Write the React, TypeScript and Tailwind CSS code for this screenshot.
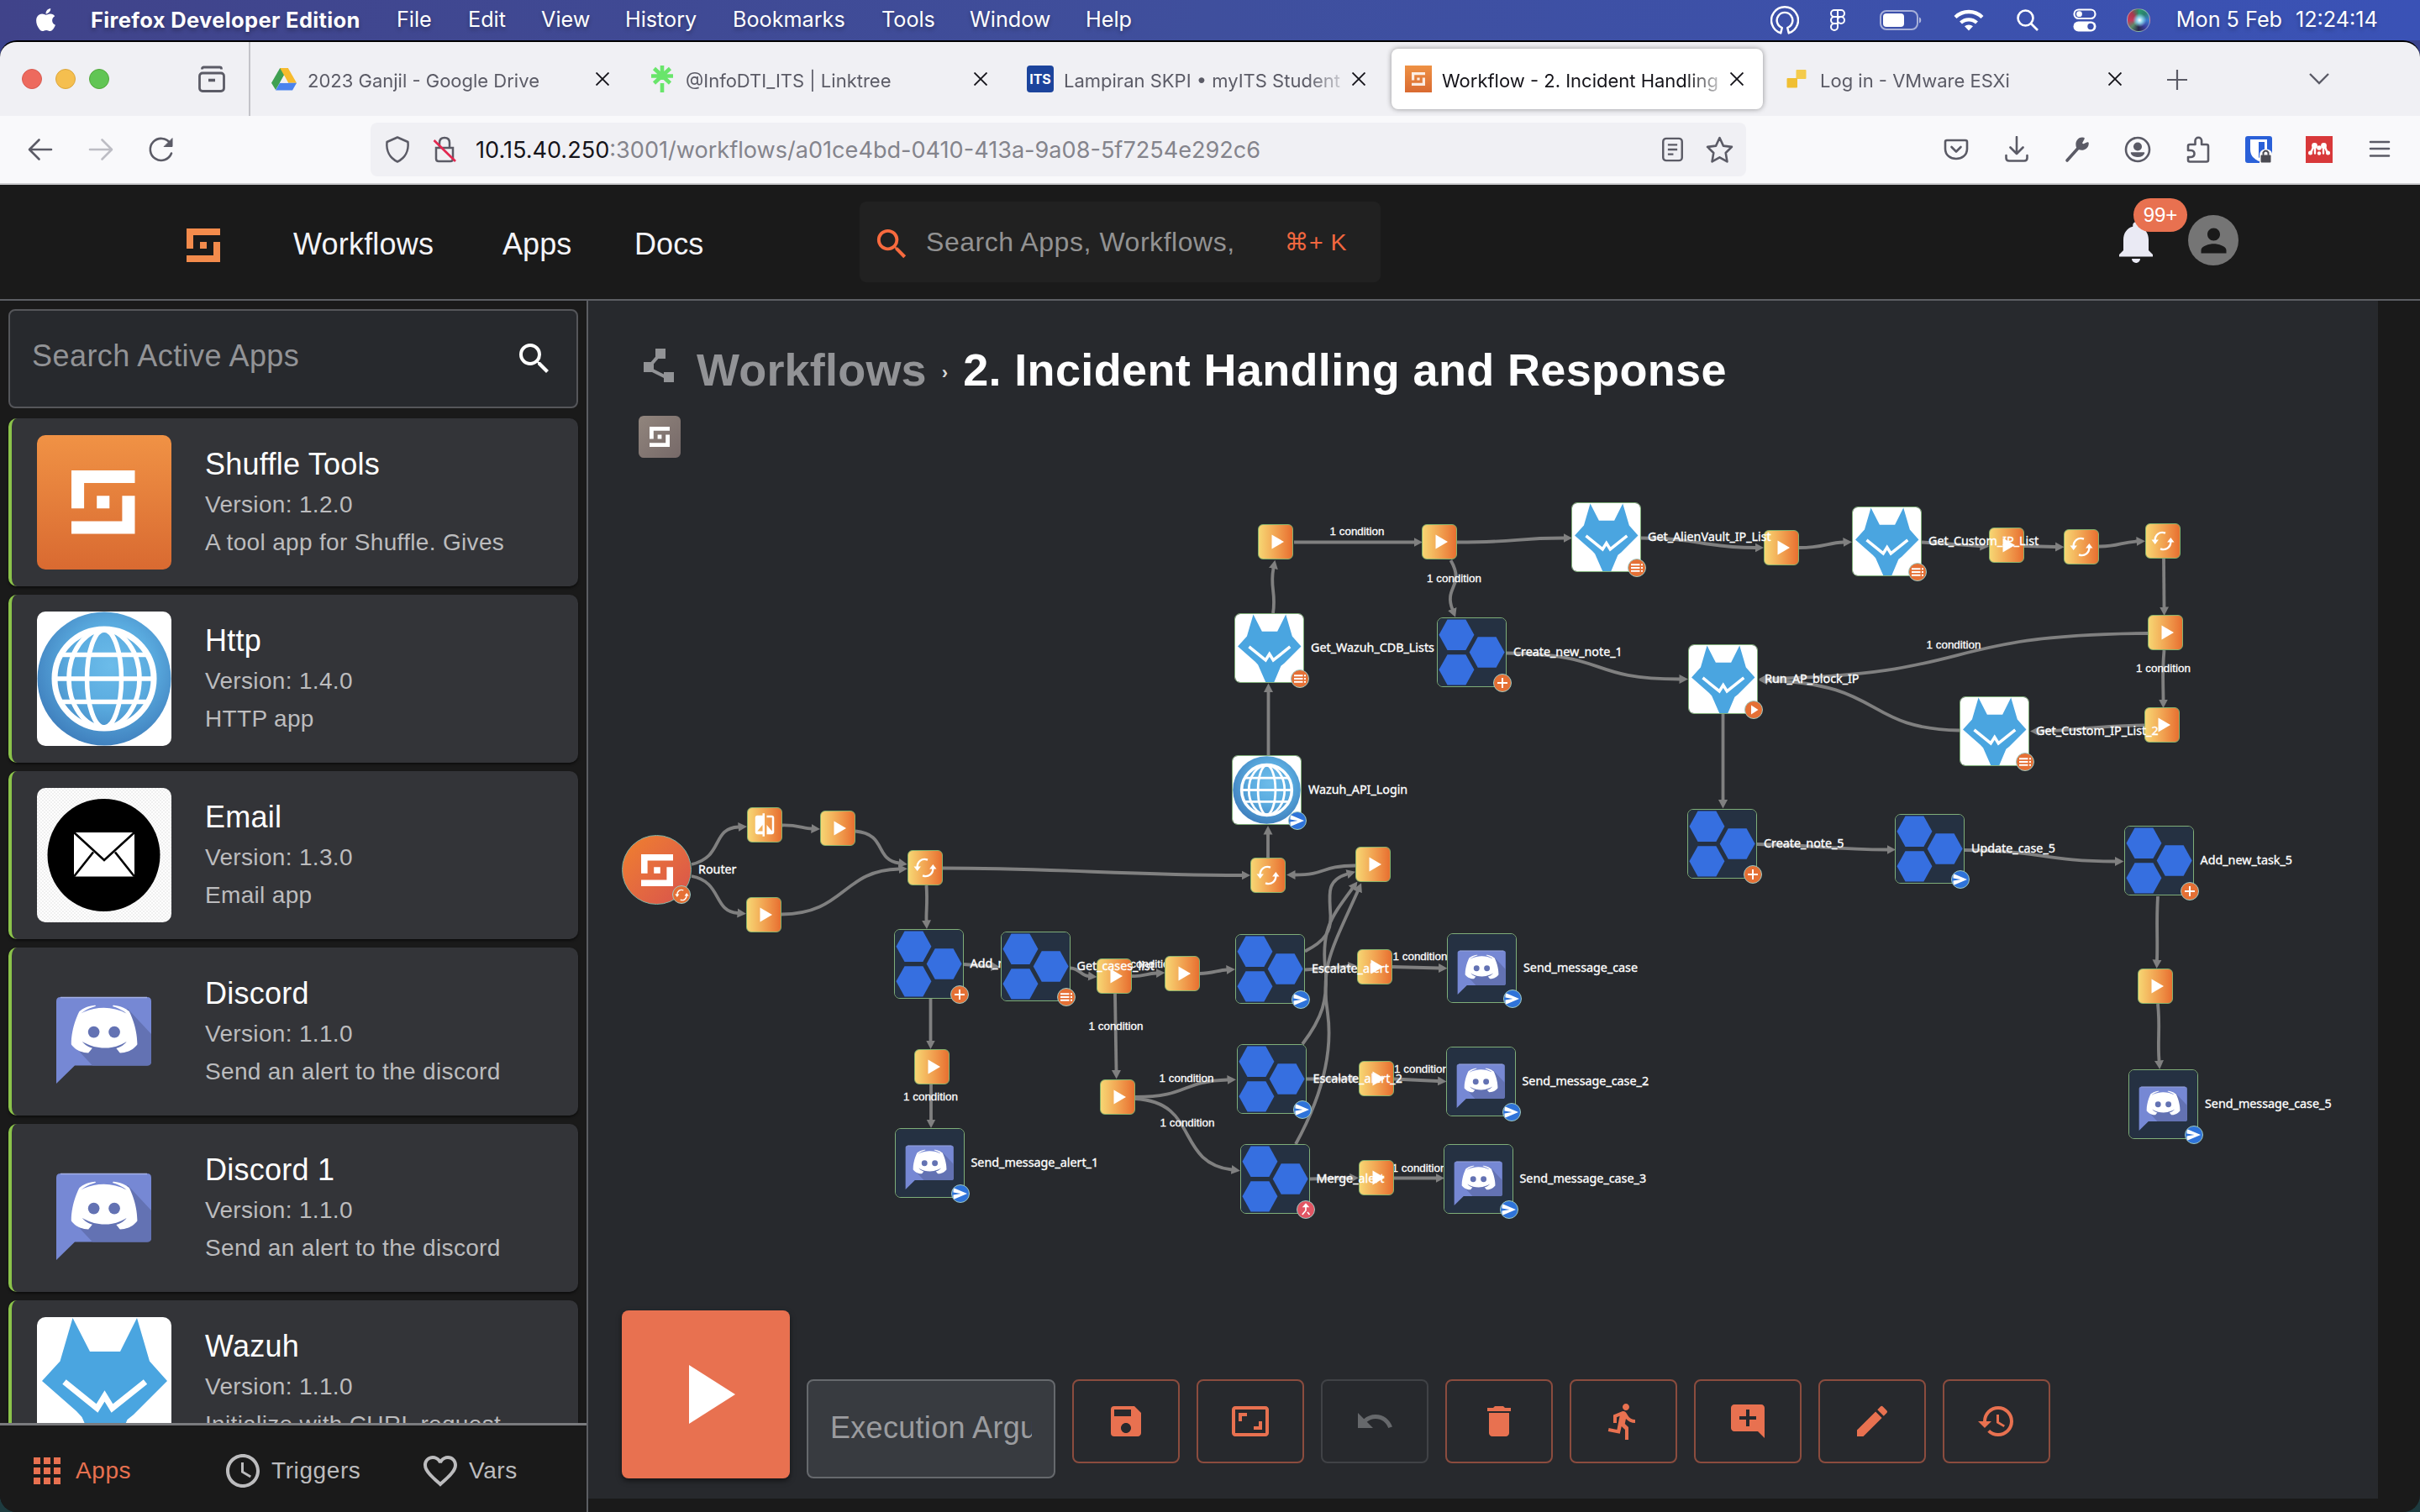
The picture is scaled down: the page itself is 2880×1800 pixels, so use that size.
import React from "react";
import {
  MdSave, MdAspectRatio, MdUndo, MdDelete, MdDirectionsRun, MdAddComment, MdEdit, MdRestore,
  MdSearch, MdApps, MdAccessTime, MdFavoriteBorder, MdNotifications, MdPolyline, MdPerson, MdCompare,
} from "react-icons/md";
import { FaApple } from "react-icons/fa";

/* ---------- artwork ---------- */

const S_PATH = "M0 0h5v1H1v2H0z M2 2h1v1H2z M4 2h1v3H0V4h4z";

const CLYDE =
  "M375.04 295.424c0-82.432-36.864-149.248-36.864-149.248-36.864-27.648-71.936-26.88-71.936-26.88l-3.584 4.096c43.52 13.312 63.744 32.512 63.744 32.512-60.811-33.329-132.244-33.335-191.232-7.424-9.472 4.352-15.104 7.424-15.104 7.424s21.248-20.224 67.328-33.536l-2.56-3.072s-35.072-.768-71.936 26.88c0 0-36.864 66.816-36.864 149.248 0 0 21.504 37.12 78.08 38.912 0 0 9.472-11.52 17.152-21.248-32.512-9.728-44.8-30.208-44.8-30.208 3.766 2.636 9.976 6.053 10.496 6.4 43.21 24.198 104.588 32.126 159.744 8.96 8.96-3.328 18.944-8.192 29.44-15.104 0 0-12.8 20.992-46.336 30.464 7.68 9.728 16.896 20.736 16.896 20.736 56.576-1.792 78.336-38.912 78.336-38.912z";

function ShuffleArt() {
  return (
    <svg viewBox="0 0 160 160" className="block size-full">
      <defs>
        <linearGradient id="shuffleBg" x1="0" y1="0" x2="0" y2="1">
          <stop offset="0" stopColor="#f09245" />
          <stop offset="1" stopColor="#d96a31" />
        </linearGradient>
      </defs>
      <rect width="160" height="160" fill="url(#shuffleBg)" />
      <path d={S_PATH} fill="#fff" transform="translate(41 42) scale(15.1)" />
    </svg>
  );
}

function HttpArt() {
  return (
    <svg viewBox="0 0 160 160" className="block size-full">
      <defs>
        <radialGradient id="globeBg" cx="0.55" cy="0.4" r="0.62">
          <stop offset="0" stopColor="#6cbcea" />
          <stop offset="0.5" stopColor="#5aabdf" />
          <stop offset="1" stopColor="#3f7fbd" />
        </radialGradient>
      </defs>
      <rect width="160" height="160" fill="#fff" />
      <circle cx="80" cy="80" r="79.5" fill="url(#globeBg)" />
      <g fill="none" stroke="#fff" strokeWidth="5.5">
        <circle cx="80" cy="80" r="59" strokeWidth="7" />
        <ellipse cx="80" cy="80" rx="42" ry="58" />
        <ellipse cx="80" cy="80" rx="20.500" ry="58" />
        <path d="M21 80h118M29 51.500h102M29 107.500h102" />
      </g>
    </svg>
  );
}

function EmailArt() {
  return (
    <svg viewBox="0 0 160 160" className="block size-full">
      <defs>
        <pattern id="checks" width="4" height="4" patternUnits="userSpaceOnUse">
          <rect width="4" height="4" fill="#ffffff" />
          <path d="M0 0h2v2H0zM2 2h2v2H2z" fill="#f0f0f0" />
        </pattern>
      </defs>
      <rect width="160" height="160" fill="url(#checks)" />
      <circle cx="79.500" cy="80" r="67" fill="#000" />
      <rect x="44" y="53" width="72" height="52.500" fill="#fff" />
      <path d="M44 53l36 33 36-33M44 105.500l23-29M116 105.500L93 76.500" fill="none" stroke="#000" strokeWidth="2.600" />
    </svg>
  );
}

function DiscordArt({ dark }: { dark?: boolean }) {
  return (
    <svg viewBox="0 0 160 160" className="block size-full">
      {dark && <rect width="160" height="160" fill="#253142" />}
      <path d="M28 39h103q5 0 5 5v71.500q0 5-5 5H45L23 142V44q0-5 5-5z" fill="#7688d4" />
      <path d="M108 53l28 30v32.500q0 5-5 5H66L45 98z" fill="#6372b3" />
      <path d="M28 39.500h103" stroke="#a3afe6" strokeWidth="1.500" />
      <g transform="translate(20.800 17.500) scale(0.263)">
        <path d={CLYDE} fill="#fff" />
        <circle cx="271" cy="240" r="26" fill="#6372b3" />
        <circle cx="178" cy="240" r="26" fill="#6372b3" />
      </g>
    </svg>
  );
}

function WazuhArt() {
  return (
    <svg viewBox="0 0 160 160" className="block size-full">
      <rect width="160" height="160" fill="#fff" />
      <path
        d="M42.500 1L63 41h36L119 1l15 51.500L155 76l-40 40-7.500 6L91.500 160h-20L53.500 119 47 112 6 76l21.500-23.500z"
        fill="#4aa5e0"
      />
      <path d="M32.500 77L71.500 108.500 80.500 94 89.500 108.500 129 77" fill="none" stroke="#fff" strokeWidth="7" />
    </svg>
  );
}

function HiveArt() {
  return (
    <svg viewBox="0 0 83 83" className="block size-full">
      <rect width="83" height="83" fill="#253142" />
      <g fill="#366fe0">
        <path d="M1.500 20.200L11.800 1.600h22.400L44.500 20.200 34.200 39H11.800z" />
        <path d="M38.600 41.500L48.900 22.900h22.400L81.600 41.500 71.300 60.200H48.900z" />
        <path d="M1.500 62.800L11.800 44.200h22.400L44.500 62.800 34.200 81.500H11.800z" />
      </g>
    </svg>
  );
}

/* ---------- workflow graph ---------- */

type Kind = "play" | "loop" | "compare" | "hive" | "wazuh" | "http" | "discord" | "router";
type Badge = "plus" | "list" | "send" | "run" | "merge" | "loop";
type GraphNode = { k: Kind; x: number; y: number; label?: string; badge?: Badge };

const nodes: GraphNode[] = [
  { k: "router", x: 782, y: 1036, label: "Router", badge: "loop" },
  { k: "compare", x: 910, y: 982.5 },
  { k: "play", x: 997.5, y: 986.5 },
  { k: "play", x: 909, y: 1089.5 },
  { k: "loop", x: 1101.5, y: 1033.5 },
  { k: "hive", x: 1105.5, y: 1147.5, label: "Add_new_case", badge: "plus" },
  { k: "play", x: 1326, y: 1162.5 },
  { k: "hive", x: 1232.5, y: 1151, label: "Get_cases_list", badge: "list" },
  { k: "play", x: 1407.5, y: 1159 },
  { k: "play", x: 1109, y: 1270.5 },
  { k: "play", x: 1330, y: 1306 },
  { k: "discord", x: 1106.5, y: 1385, label: "Send_message_alert_1", badge: "send" },
  { k: "loop", x: 1509.5, y: 1042 },
  { k: "play", x: 1634, y: 1029.5 },
  { k: "play", x: 1636, y: 1151 },
  { k: "hive", x: 1512, y: 1154, label: "Escalate_alert", badge: "send" },
  { k: "discord", x: 1764, y: 1153, label: "Send_message_case", badge: "send" },
  { k: "play", x: 1638, y: 1284.5 },
  { k: "hive", x: 1513.5, y: 1284.5, label: "Escalate_alert_2", badge: "send" },
  { k: "discord", x: 1762.5, y: 1288, label: "Send_message_case_2", badge: "send" },
  { k: "play", x: 1638, y: 1402.5 },
  { k: "hive", x: 1517.5, y: 1403.5, label: "Merge_alert", badge: "merge" },
  { k: "discord", x: 1759.5, y: 1403.5, label: "Send_message_case_3", badge: "send" },
  { k: "play", x: 1518.5, y: 645.5 },
  { k: "play", x: 1713.5, y: 645.5 },
  { k: "play", x: 2120, y: 652 },
  { k: "wazuh", x: 1912, y: 639.5, label: "Get_AlienVault_IP_List", badge: "list" },
  { k: "play", x: 2388.5, y: 649.5 },
  { k: "wazuh", x: 2246, y: 644.5, label: "Get_Custom_IP_List", badge: "list" },
  { k: "loop", x: 2477, y: 651 },
  { k: "loop", x: 2574.5, y: 644 },
  { k: "play", x: 2577, y: 753.5 },
  { k: "play", x: 2573, y: 863.5 },
  { k: "wazuh", x: 2374, y: 871, label: "Get_Custom_IP_List_2", badge: "list" },
  { k: "wazuh", x: 1511, y: 772, label: "Get_Wazuh_CDB_Lists", badge: "list" },
  { k: "hive", x: 1752, y: 777, label: "Create_new_note_1", badge: "plus" },
  { k: "wazuh", x: 2051, y: 809, label: "Run_AP_block_IP", badge: "run" },
  { k: "http", x: 1508, y: 941, label: "Wazuh_API_Login", badge: "send" },
  { k: "hive", x: 2050, y: 1005, label: "Create_note_5", badge: "plus" },
  { k: "hive", x: 2297, y: 1011, label: "Update_case_5", badge: "send" },
  { k: "hive", x: 2569.5, y: 1025, label: "Add_new_task_5", badge: "plus" },
  { k: "play", x: 2565, y: 1174 },
  { k: "discord", x: 2575, y: 1315, label: "Send_message_case_5", badge: "send" },
];

const edges = [
  "M823 1029C862 1020 846 986 879 984.5",
  "M931 982.500C948 982 956 986 966 986.500",
  "M1018 989.500C1056 993 1040 1023 1070 1027.500",
  "M823 1043C860 1050 848 1085 878 1087",
  "M930 1088.500C1006 1088 1002 1036 1070 1034.500",
  "M1102.500 1054C1104 1075 1102 1085 1102.500 1096",
  "M1107.500 1188V1239",
  "M1108 1291V1333",
  "M1122 1033.500C1260 1033.500 1340 1042 1478 1042",
  "M1147 1148L1180 1150.500",
  "M1274 1152.500C1285 1153 1286 1161 1295.500 1162",
  "M1347 1162C1360 1163 1364 1159 1376.500 1158.500",
  "M1428 1159C1442 1159 1450 1155 1460 1154.500",
  "M1327 1183L1328.500 1274.500",
  "M1351 1306C1415 1306 1405 1287 1461 1285.500",
  "M1351 1308C1428 1312 1398 1384 1466 1392.500",
  "M1509 1021V993",
  "M1613 1030.500C1570 1031 1580 1041.500 1541 1041.500",
  "M1553 1132.500C1578 1120 1584 1108 1583.500 1090C1582 1064 1578 1048 1603.500 1040.500",
  "M1550 1243C1575 1210 1579 1190 1578 1160C1571 1108 1584 1092 1609.500 1057.500",
  "M1542 1362C1576 1300 1586 1250 1580 1206C1571 1150 1585 1130 1616 1060.500",
  "M1553 1154.500L1605 1150.500",
  "M1657 1151L1712.500 1152.500",
  "M1555 1284.500H1607",
  "M1659 1284.500L1711.500 1287",
  "M1559 1403.500L1607 1402.500",
  "M1659 1402.500H1709",
  "M1509.500 900V823.500",
  "M1515 730C1519 705 1511 700 1515.500 676.500",
  "M1540 645.500H1683",
  "M1734 645.500C1810 645.500 1800 640.500 1861 640.500",
  "M1726.500 667C1744 698 1718 698 1728.500 725.500",
  "M1953 640.500C2020 640.500 2030 652 2089 652",
  "M2141 652C2170 652 2175 646 2194 645.500",
  "M2287 645.500L2357 650",
  "M2409 650L2446.500 651",
  "M2498 650.500C2520 651 2525 645 2543 644.500",
  "M2575 665L2575.500 723",
  "M2575.500 774C2573 800 2574.500 815 2574.500 833",
  "M2556 754C2300 756 2360 803 2103 808",
  "M2332 869.500C2215 867 2245 814 2103 810",
  "M2552 863.500C2490 864 2470 870 2426 870.500",
  "M1793 777.500C1920 779 1885 808 1999 808.500",
  "M2050.500 850V952.500",
  "M2091 1005C2160 1006 2180 1011.500 2246 1011.500",
  "M2338 1012C2430 1012.500 2430 1025 2517.500 1025.500",
  "M2568 1067C2566 1100 2568 1115 2567 1143",
  "M2568 1195C2571 1225 2567.500 1235 2569.500 1263",
];

const edgeLabels: [number, number][] = [
  [1615, 632.5], [1730.5, 688.5], [2325, 768], [2574.5, 796], [1107.5, 1305.5], [1328, 1221.5],
  [1366.5, 1147.5], [1412, 1283.5], [1413, 1336.5], [1690, 1138.5], [1691.5, 1273], [1689, 1390.5],
];

function LoopGlyph({ className }: { className?: string }) {
  return (
    <svg viewBox="0 0 28 28" className={className} fill="none" stroke="#fff" strokeWidth="2.400">
      <path d="M17 4.700C10 2 4.600 7 4.600 13.500M11 23.300c7 2.700 12.400-2.300 12.400-8.800" />
      <path d="M0.500 12.500h8.400L4.700 18zM27.500 15.500h-8.400L23.300 10z" fill="#fff" stroke="none" />
    </svg>
  );
}

function BadgeGlyph({ badge }: { badge: Badge }) {
  if (badge === "loop") return <LoopGlyph className="size-[17px]" />;
  return (
    <svg viewBox="0 0 20 20" className="size-[20px]">
      {badge === "plus" && <path d="M10 4v12M4 10h12" stroke="#fff" strokeWidth="2" />}
      {badge === "list" && <path d="M3 6.300h10.500M15 6.300h2M3 10h10.500M15 10h2M3 13.700h10.500M15 13.700h2" stroke="#fff" strokeWidth="1.900" />}
      {badge === "send" && <path d="M1.500 3L18 10 1.500 17V11.500L10.500 10 1.500 8.500z" fill="#fff" />}
      {badge === "run" && <path d="M7 4.500l8.500 5.500L7 15.500z" fill="#fff" />}
      {badge === "merge" && (
        <path d="M10 5v6L5.800 16M12 13l2.500 3M7.500 6.500L10 3.500l2.500 3z" fill="none" stroke="#fff" strokeWidth="1.700" />
      )}
    </svg>
  );
}

const badgeColor: Record<Badge, string> = {
  plus: "bg-[#e57035]", list: "bg-[#e57035]", run: "bg-[#e57035]", loop: "bg-[#e57035]",
  send: "bg-[#2f73d9]", merge: "bg-[#e25563]",
};

function NodeView({ n }: { n: GraphNode }) {
  const small = n.k === "play" || n.k === "loop" || n.k === "compare";
  const half = small ? 21.5 : 42;
  const pos = { left: n.x - 700 - half, top: n.y - 358 - half };
  if (small) {
    return (
      <div
        style={pos}
        className="absolute flex size-[42px] items-center justify-center rounded-[6px] border border-[#86b26c] bg-linear-to-r from-[#f6d673] to-[#e76f30]"
      >
        {n.k === "play" && (
          <svg viewBox="0 0 42 42" className="size-[42px] shrink-0"><path d="M16.500 12.500L31 21 16.500 29.500z" fill="#fff" /></svg>
        )}
        {n.k === "loop" && <LoopGlyph className="size-[28px]" />}
        {n.k === "compare" && <MdCompare className="size-[30px] text-white" />}
      </div>
    );
  }
  return (
    <div style={pos} className="absolute size-[83px]">
      <div
        className={
          n.k === "router"
            ? "flex size-full items-center justify-center rounded-full border border-[#7fb5a5] bg-linear-to-br from-[#f0802b] to-[#d8524b]"
            : "size-full overflow-hidden rounded-[7px] border border-[#7fae79]"
        }
      >
        {n.k === "router" && <svg viewBox="0 0 5 5" className="size-[38px]"><path d={S_PATH} fill="#fff" /></svg>}
        {n.k === "hive" && <HiveArt />}
        {n.k === "wazuh" && <WazuhArt />}
        {n.k === "http" && <HttpArt />}
        {n.k === "discord" && <DiscordArt dark />}
      </div>
      {n.badge && (
        <div
          className={`absolute flex size-[22px] items-center justify-center overflow-hidden rounded-full border border-[#9cc7c0] ${badgeColor[n.badge]} ${n.badge === "loop" ? "left-[60px] top-[60px]" : "left-[67px] top-[67px]"}`}
        >
          <BadgeGlyph badge={n.badge} />
        </div>
      )}
      <span className="absolute left-[91px] top-[31px] whitespace-nowrap font-['Noto_Sans',sans-serif] text-[14.3px] leading-[20px] text-white [-webkit-text-stroke:0.35px_#fff]">
        {n.label}
      </span>
    </div>
  );
}

function Graph() {
  return (
    <>
      <svg viewBox="700 358 2130 1426" className="absolute left-0 top-0 h-[1426px] w-[2130px]">
        <defs>
          <marker id="tip" markerWidth="12" markerHeight="12" refX="0.500" refY="6" orient="auto" markerUnits="userSpaceOnUse">
            <path d="M0 0.500L10.500 6 0 11.500z" fill="#808080" />
          </marker>
        </defs>
        {edges.map((d) => (
          <path key={d} d={d} fill="none" stroke="#808080" strokeWidth="3.800" markerEnd="url(#tip)" />
        ))}
      </svg>
      {edgeLabels.map(([x, y]) => (
        <span
          key={`${x}-${y}`}
          style={{ left: x - 700, top: y - 358 }}
          className="absolute -translate-x-1/2 -translate-y-1/2 whitespace-nowrap text-[13.4px] leading-[16px] text-white [-webkit-text-stroke:0.3px_#fff]"
        >
          1 condition
        </span>
      ))}
      {nodes.map((n) => <NodeView key={`${n.x}-${n.y}`} n={n} />)}
    </>
  );
}

/* ---------- menu bar ---------- */

function MenuBar() {
  return (
    <div className="flex h-[48px] shrink-0 items-center bg-linear-to-r from-[#40438a] via-[#3f4f9d] to-[#3a52b6] font-['Inter',sans-serif] text-[25.2px] text-white [text-shadow:0_3px_5px_rgba(0,0,0,0.3)]">
      <FaApple className="ml-[39px] mt-[-2px] size-[31px]" />
      <span className="ml-[38px] w-[364px] whitespace-nowrap text-[25.500px] font-bold tracking-[0.350px]">Firefox Developer Edition</span>
      <span className="w-[85px]">File</span>
      <span className="w-[87px]">Edit</span>
      <span className="w-[100px]">View</span>
      <span className="w-[128px]">History</span>
      <span className="w-[177px]">Bookmarks</span>
      <span className="w-[105px]">Tools</span>
      <span className="w-[138px]">Window</span>
      <span>Help</span>
      <div className="ml-auto flex h-full items-center">
        <svg viewBox="0 0 32 32" className="size-[34px]" fill="none" stroke="#fff" strokeWidth="2.300" strokeLinejoin="round">
          <path d="M11.500 30.500A15 15 0 1 1 20.500 30.500L19 24.500A8.800 8.800 0 1 0 13 24.500z" />
        </svg>
        <svg viewBox="0 0 20 28" className="ml-[36px] h-[28px] w-[20px]" fill="none" stroke="#fff" strokeWidth="2">
          <path d="M10 2H6a4 4 0 0 0 0 8h4zM10 2h4a4 4 0 0 1 0 8h-4zM10 10H6a4 4 0 0 0 0 8h4zM14 10a4 4 0 1 1 0 8 4 4 0 0 1 0-8zM10 18H6a4 4 0 1 0 4 4z" />
        </svg>
        <svg viewBox="0 0 50 24" className="ml-[40px] h-[24px] w-[50px]">
          <rect x="1" y="1" width="44" height="22" rx="7" fill="none" stroke="#fff" strokeOpacity="0.55" strokeWidth="2" />
          <rect x="4" y="4" width="25" height="16" rx="4" fill="#fff" />
          <path d="M47 8.500c3 .8 3 6.200 0 7z" fill="#fff" fillOpacity="0.600" />
        </svg>
        <svg viewBox="0 0 36 26" className="ml-[38px] h-[26px] w-[36px]" fill="none" stroke="#fff" strokeWidth="4.300">
          <path d="M2 9.500a23 23 0 0 1 32 0M8.500 16a14 14 0 0 1 19 0" />
          <path d="M18 25.500l5-5.200a7.500 7.500 0 0 0-10 0z" fill="#fff" stroke="none" />
        </svg>
        <svg viewBox="0 0 28 28" className="ml-[38px] size-[28px]" fill="none" stroke="#fff" strokeWidth="2.600">
          <circle cx="11.500" cy="11.500" r="9" /><path d="M18 18l8 8" />
        </svg>
        <svg viewBox="0 0 28 28" className="ml-[40px] size-[28px]">
          <rect x="1.500" y="1.500" width="25" height="10.500" rx="5.200" fill="none" stroke="#fff" strokeWidth="2.200" />
          <circle cx="7.500" cy="6.700" r="3.400" fill="#fff" />
          <rect x="0.500" y="15.500" width="27" height="12" rx="6" fill="#fff" />
          <circle cx="21" cy="21.500" r="3.700" fill="#3c51ad" />
        </svg>
        <div className="ml-[36px] size-[28px] rounded-full border border-white/40 bg-[radial-gradient(circle_at_55%_50%,#ffffff_0%,#8ad0e8_18%,transparent_42%),conic-gradient(#2a9a6f,#2a7f6f,#3a7bd0,#3b3fa0,#28284a,#5a8a6a,#c8385a,#a8384e,#2d8a5f)]" />
        <span className="ml-[31px] whitespace-pre">Mon 5 Feb</span>
        <span className="ml-[16px] mr-[37px] w-[111px] whitespace-nowrap">12:24:14</span>
      </div>
    </div>
  );
}

/* ---------- browser chrome ---------- */

function DriveIcon() {
  return (
    <svg viewBox="0 0 30 27" className="h-[27px] w-[30px]">
      <path d="M10.200 0h9.600L10 17.500 5 26 0 17.800z" fill="#3fa052" />
      <path d="M10.200 0h9.600L30 17.800H20.200z" fill="#f7bb2d" />
      <path d="M10 17.800h20L25 26.500H5z" fill="#4a83ee" />
      <path d="M15 8.700l-5 9.100h10z" fill="#f0f0f4" />
    </svg>
  );
}
function LinktreeIcon() {
  return (
    <svg viewBox="0 0 28 32" className="h-[32px] w-[28px]" stroke="#69e56b" strokeWidth="4.600" fill="none">
      <path d="M14 0v17M14 21v11M1 12.500h26M4.500 3.500L23.500 21M23.500 3.500L4.500 21" />
    </svg>
  );
}
function ItsIcon() {
  return (
    <span className="flex size-[32px] items-center justify-center rounded-[4px] bg-[#1c449c] text-[16px] font-bold leading-none text-white">ITS</span>
  );
}
function ShuffleTabIcon() {
  return (
    <span className="flex size-[32px] items-center justify-center bg-linear-to-b from-[#ee9144] to-[#d96a31]">
      <svg viewBox="0 0 5 5" className="size-[16px]"><path d={S_PATH} fill="#fff" fillOpacity="0.850" /></svg>
    </span>
  );
}
function VmIcon() {
  return (
    <svg viewBox="0 0 24 22" className="h-[22px] w-[24px]">
      <rect x="11.500" y="0" width="12" height="11" rx="1" fill="#f4cb4c" />
      <rect x="0.500" y="10" width="12.500" height="11.500" rx="1" fill="#f0bf33" />
    </svg>
  );
}

const tabs = [
  { t: "2023 Ganjil - Google Drive", I: DriveIcon },
  { t: "@InfoDTI_ITS | Linktree", I: LinktreeIcon },
  { t: "Lampiran SKPI • myITS Student", I: ItsIcon },
  { t: "Workflow - 2. Incident Handling", I: ShuffleTabIcon, active: true },
  { t: "Log in - VMware ESXi", I: VmIcon },
];

function TabStrip() {
  return (
    <div className="flex h-[88px] items-center bg-[#f0f0f4] font-['Inter',sans-serif]">
      <div className="ml-[26px] flex gap-[16px]">
        <i className="size-[24px] rounded-full border border-[#d85a50] bg-[#ed6a5e]" />
        <i className="size-[24px] rounded-full border border-[#dba63c] bg-[#f5bf4f]" />
        <i className="size-[24px] rounded-full border border-[#52a83c] bg-[#61c554]" />
      </div>
      <svg viewBox="0 0 32 32" className="ml-[106px] size-[32px]" fill="none" stroke="#5b5b66" strokeWidth="2.800">
        <rect x="1.500" y="9" width="29" height="21.500" rx="3.500" />
        <path d="M4.500 4.500V4Q4.500 2 6.500 2h19q2 0 2 2v.5" />
        <path d="M12 17.500h8" strokeWidth="3.500" />
      </svg>
      <div className="ml-[28px] h-full w-[2px] bg-[#c3c3c9]" />
      <div className="ml-[4px] flex">
        {tabs.map(({ t, I, active }) => (
          <div key={t} className="w-[450px] px-[4px]">
            <div className={`flex h-[72px] items-center rounded-[8px] pl-[16px] ${active ? "bg-white shadow-[0_0_6px_rgba(0,0,0,0.4)]" : ""}`}>
              <span className="flex w-[32px] justify-center"><I /></span>
              <span
                className={`ml-[12px] mt-[4px] w-[332px] overflow-hidden whitespace-nowrap text-[22px] ${active ? "text-[#15141a]" : "text-[#5b5b66]"} [mask-image:linear-gradient(90deg,#000_290px,rgba(0,0,0,0.2)_332px)]`}
              >
                {t}
              </span>
              <svg viewBox="0 0 16 16" className="ml-[11px] size-[16px]" stroke="#15141a" strokeWidth="1.900"><path d="M0.500 0.500l15 15M15.500 0.500l-15 15" /></svg>
            </div>
          </div>
        ))}
      </div>
      <svg viewBox="0 0 24 24" className="ml-[27px] mt-[2px] size-[24px]" stroke="#5b5b66" strokeWidth="2.200"><path d="M12 0v24M0 12h24" /></svg>
      <svg viewBox="0 0 24 14" className="ml-[145px] h-[14px] w-[24px]" fill="none" stroke="#5b5b66" strokeWidth="2.400"><path d="M1 1l11 11L23 1" /></svg>
    </div>
  );
}

function Cell({ children }: { children: React.ReactNode }) {
  return (
    <span className="flex w-[72px] justify-center">
      <svg viewBox="0 0 32 32" className="size-[32px]" fill="none" stroke="#5b5b66" strokeWidth="2.600" strokeLinecap="round" strokeLinejoin="round">
        {children}
      </svg>
    </span>
  );
}

function Toolbar() {
  return (
    <div className="flex h-[82px] items-center border-b-2 border-[#cccccf] bg-[#f9f9fb] px-[12px]">
      <Cell><path d="M29 16H3.500M14.500 4.500L3 16l11.500 11.500" /></Cell>
      <Cell><g stroke="#bdbdc4"><path d="M3 16h25.500M17.500 4.500L29 16 17.500 27.500" /></g></Cell>
      <Cell><path d="M28 20.500A13 13 0 1 1 26.500 8.500" /><path d="M29 3v9.500h-9.500z" fill="#5b5b66" strokeWidth="1" /></Cell>
      <div className="ml-[213px] flex h-[64px] w-[1637px] items-center rounded-[8px] bg-[#f0f0f4] pl-[16px]">
        <svg viewBox="0 0 32 32" className="size-[32px]" fill="none" stroke="#5b5b66" strokeWidth="2.500" strokeLinejoin="round">
          <path d="M16 1.500l12.500 5.500c1 10-3 19-12.500 23.500C6.500 26 2.500 17 3.500 7z" />
        </svg>
        <svg viewBox="0 0 32 32" className="ml-[24px] size-[32px]" fill="none" stroke="#5b5b66" strokeWidth="2.500">
          <path d="M6 14h20v13q0 3-3 3H9q-3 0-3-3zM10 14V8q0-6 6-6t6 6v6" />
          <path d="M3.500 5L29 30" stroke="#e22850" strokeWidth="2.700" />
        </svg>
        <span className="ml-[21px] mt-[2px] whitespace-nowrap font-['Inter',sans-serif] text-[27.100px] text-[#84848c]">
          <span className="text-[#15141a]">10.15.40.250</span>:3001/workflows/a01ce4bd-0410-413a-9a08-5f7254e292c6
        </span>
        <svg viewBox="0 0 28 32" className="ml-auto h-[30px] w-[27px]" fill="none" stroke="#5b5b66" strokeWidth="2.600">
          <rect x="2" y="2" width="24" height="28" rx="4" /><path d="M8 10h12M8 16h12M8 22h7" />
        </svg>
        <svg viewBox="0 0 32 32" className="ml-[26px] mr-[15px] size-[33px]" fill="none" stroke="#5b5b66" strokeWidth="2.500" strokeLinejoin="round">
          <path d="M16 2l4.300 9.300 9.700 1.200-7 6.900 1.700 10.100L16 24.600 7.300 29.500 9 19.400l-7-6.900 9.700-1.200z" />
        </svg>
      </div>
      <div className="ml-auto flex">
        <Cell><path d="M5 5h22q2 0 2 2v8c0 16-26 16-26 0V7q0-2 2-2zM10.500 13l5.500 5.500 5.500-5.500" /></Cell>
        <Cell><path d="M16 1v20M8.500 13.500l7.500 7.500 7.500-7.500M3.500 23v3q0 3.500 3.500 3.500h18q3.500 0 3.500-3.500v-3" /></Cell>
        <Cell><path d="M4 29L17 14.500" strokeWidth="3.600" /><path d="M28.500 8.500l-5.500 2.500-2.500-2.500L23.500 3c-6-.8-9.500 4.500-7 10.500 4 3.500 12 2 12-5z" fill="#5b5b66" /></Cell>
        <Cell><circle cx="16" cy="16" r="14" /><circle cx="16" cy="12.500" r="5" fill="#5b5b66" stroke="none" /><path d="M8.500 20h15c-1.500 5.500-13.500 5.500-15 0z" fill="#5b5b66" strokeWidth="1.500" /></Cell>
        <Cell><path d="M12.500 10V5.500a3.800 3.800 0 0 1 7.600 0V10H26q2 0 2 2v16.500q0 2-2 2H6q-2 0-2-2V25h3.500q4-.5 4-4t-4-4H4v-5q0-2 2-2z" /></Cell>
        <Cell>
          <rect width="32" height="32" rx="3" fill="#2a60d8" stroke="none" />
          <path d="M6 4h20v12c0 8-5 11-10 14-5-3-10-6-10-14z" fill="#fff" stroke="none" /><path d="M16 7h7v9c0 4-4 8-7 10z" fill="#2a60d8" stroke="none" />
          <path d="M17 32V23q0-7 7-7.500 6.500 0 8 5V32z" fill="#f9f9fb" stroke="none" /><rect x="18.500" y="22.500" width="12" height="9" rx="1" fill="#4a4a52" stroke="none" /><path d="M21.500 22v-2.500q3-4 6 0V22" stroke="#4a4a52" strokeWidth="2" />
        </Cell>
        <Cell>
          <rect width="32" height="32" fill="#d8383a" stroke="none" />
          <g fill="#fff" stroke="none"><circle cx="10.500" cy="11.500" r="3.400" /><circle cx="21.500" cy="11.500" r="3.400" /><circle cx="16" cy="14" r="2.800" /><circle cx="5.500" cy="20" r="2.500" /><circle cx="26.500" cy="20" r="2.500" /><circle cx="16" cy="20.500" r="2.200" /></g>
          <path d="M9.500 12L6.500 19M22.500 12l3 7M11 13v7.500M21 13v7.500" stroke="#fff" strokeWidth="2.400" />
        </Cell>
        <Cell><path d="M5 7h22M5 15h22M5 23.500h22" /></Cell>
      </div>
    </div>
  );
}

/* ---------- app header ---------- */

function AppHeader() {
  return (
    <div className="flex h-[138px] shrink-0 items-center border-b-2 border-[#5c5e63] bg-[#1a1a1a] text-[36px] text-[#f4f4f8]">
      <svg viewBox="0 0 5 5" className="ml-[222px] mt-[8px] size-[40px]"><path d={S_PATH} fill="#f38b4c" /></svg>
      <span className="ml-[87px] mt-[5px] w-[249px] tracking-[0.200px]">Workflows</span>
      <span className="mt-[5px] w-[157px] tracking-[0.100px]">Apps</span>
      <span className="mt-[5px] w-[268px] tracking-[0.100px]">Docs</span>
      <div className="flex h-[96px] w-[620px] items-center rounded-[8px] bg-[#212121]">
        <MdSearch className="ml-[15px] mt-[4px] size-[47px] text-[#f86a3e]" />
        <span className="ml-[17px] w-[427px] whitespace-nowrap text-[32px] tracking-[0.550px] text-[#929292]">Search Apps, Workflows,</span>
        <span className="whitespace-nowrap text-[28.500px] tracking-[0.500px] text-[#f2673f] [font-family:'Liberation_Sans','DejaVu_Sans',sans-serif]">⌘+ K</span>
      </div>
      <div className="relative ml-[869px] size-[60px]">
        <MdNotifications className="size-[60px] text-[#eaeaf4]" />
        <span className="absolute left-[27px] top-[-22px] flex h-[40px] w-[64px] items-center justify-center rounded-[20px] bg-[#e87150] text-[24px] text-white">99+</span>
      </div>
      <div className="ml-[32px] mt-[-4px] flex size-[60px] items-center justify-center rounded-full bg-[#757575]">
        <MdPerson className="size-[45px] text-[#1a1a1a]" />
      </div>
    </div>
  );
}

/* ---------- sidebar ---------- */

const apps = [
  { name: "Shuffle Tools", version: "1.2.0", desc: "A tool app for Shuffle. Gives", art: <ShuffleArt /> },
  { name: "Http", version: "1.4.0", desc: "HTTP app", art: <HttpArt /> },
  { name: "Email", version: "1.3.0", desc: "Email app", art: <EmailArt /> },
  { name: "Discord", version: "1.1.0", desc: "Send an alert to the discord", art: <DiscordArt /> },
  { name: "Discord 1", version: "1.1.0", desc: "Send an alert to the discord", art: <DiscordArt /> },
  { name: "Wazuh", version: "1.1.0", desc: "Initialize with CURL request", art: <WazuhArt /> },
];

function Sidebar() {
  return (
    <div className="flex w-[700px] shrink-0 flex-col border-r-2 border-[#5c5e63] bg-[#1a1a1a]">
      <div className="flex h-[1336px] flex-col overflow-hidden pl-[10px] pr-[10px] pt-[10px]">
        <div className="flex h-[118px] shrink-0 items-center justify-between rounded-[8px] border-2 border-[#55565a] bg-[#27292d] pl-[26px] pr-[26px]">
          <span className="mb-[6px] text-[36px] tracking-[0.450px] text-[#929396]">Search Active Apps</span>
          <MdSearch className="size-[48px] text-white" />
        </div>
        <div className="mt-[12px] flex flex-col gap-[10px]">
          {apps.map((a) => (
            <div key={a.name} className="flex h-[200px] shrink-0 rounded-[10px] border-l-4 border-[#8bc34a] bg-[#333438] shadow-[0_2px_3px_rgba(0,0,0,0.5)]">
              <div className="ml-[30px] mt-[20px] size-[160px] shrink-0 overflow-hidden rounded-[10px]">{a.art}</div>
              <div className="ml-[40px] pt-[31px] text-[28px] tracking-[0.330px] text-[#bcbcbe]">
                <div className="text-[36px] leading-[48px] tracking-[0.250px] text-white">{a.name}</div>
                <div className="leading-[48px]">Version: {a.version}</div>
                <div className="whitespace-nowrap leading-[42px]">{a.desc}</div>
              </div>
            </div>
          ))}
        </div>
      </div>
      <div className="flex flex-1 items-center border-t-[3px] border-[#7a7b7e] pt-[4px] text-[28px] tracking-[0.600px] text-[#bcbcbe]">
        <MdApps className="ml-[32px] size-[48px] text-[#e87150]" />
        <span className="ml-[10px] w-[175px] text-[#e87150]">Apps</span>
        <MdAccessTime className="size-[48px]" />
        <span className="ml-[10px] w-[177px]">Triggers</span>
        <MdFavoriteBorder className="size-[48px]" />
        <span className="ml-[10px]">Vars</span>
      </div>
    </div>
  );
}

/* ---------- canvas ---------- */

const actions = [MdSave, MdAspectRatio, MdUndo, MdDelete, MdDirectionsRun, MdAddComment, MdEdit, MdRestore];

function Canvas() {
  return (
    <div className="relative flex h-[1426px] w-[2130px] flex-col bg-[#27292d]">
      <Graph />
      <div className="mt-[49px] flex items-center pl-[60px] text-[54px] font-bold leading-[66px]">
        <MdPolyline className="mt-[-10px] size-[48px] text-[#929396]" />
        <span className="ml-[21px] tracking-[0.200px] text-[#929396]">Workflows</span>
        <span className="ml-[18px] mr-[18px] mt-[8px] text-[22px] leading-none text-[#d8d8d8]">›</span>
        <span className="whitespace-nowrap tracking-[0.350px] text-white">2. Incident Handling and Response</span>
      </div>
      <div className="ml-[60px] mt-[22px] flex size-[50px] items-center justify-center rounded-[6px] bg-linear-to-br from-[#91857d] to-[#766968]">
        <svg viewBox="0 0 5 5" className="size-[24px]"><path d={S_PATH} fill="#fff" /></svg>
      </div>
      <div className="mb-[24px] mt-auto flex h-[200px] items-end pl-[40px]">
        <div className="flex size-[200px] items-center justify-center rounded-[8px] bg-[#e87150] shadow-[0_3px_6px_rgba(0,0,0,0.5)]">
          <svg viewBox="0 0 55 70" className="ml-[14px] h-[70px] w-[55px]"><path d="M0 0l55 35L0 70z" fill="#fff" /></svg>
        </div>
        <div className="ml-[20px] flex h-[118px] w-[296px] items-center rounded-[8px] border-2 border-[#66696d] bg-[#383b40] px-[26px] pb-[3px]">
          <span className="block w-[240px] overflow-hidden whitespace-nowrap text-[36px] tracking-[0.300px] text-[#9b9c9f]">Execution Argument</span>
        </div>
        <div className="ml-[20px] flex gap-[20px] self-end pb-[18px]">
          {actions.map((Icon, i) => (
            <div
              key={i}
              className={`flex h-[100px] w-[128px] items-center justify-center rounded-[8px] border-2 ${i === 2 ? "border-[#404246] text-[#66686b]" : "border-[#8b4c3e] text-[#e87150]"}`}
            >
              <Icon className="size-[48px]" />
            </div>
          ))}
        </div>
      </div>
    </div>
  );
}

export default function App() {
  return (
    <div className="flex h-[1800px] w-[2880px] flex-col overflow-hidden bg-linear-to-b from-[#3b4391] to-[#1d3b3f] [font-family:'Liberation_Sans',Arial,sans-serif]">
      <MenuBar />
      <div className="flex flex-1 flex-col overflow-hidden rounded-[20px] border-t-2 border-black bg-[#1a1a1a]">
        <TabStrip />
        <Toolbar />
        <AppHeader />
        <div className="flex flex-1">
          <Sidebar />
          <Canvas />
        </div>
      </div>
    </div>
  );
}
